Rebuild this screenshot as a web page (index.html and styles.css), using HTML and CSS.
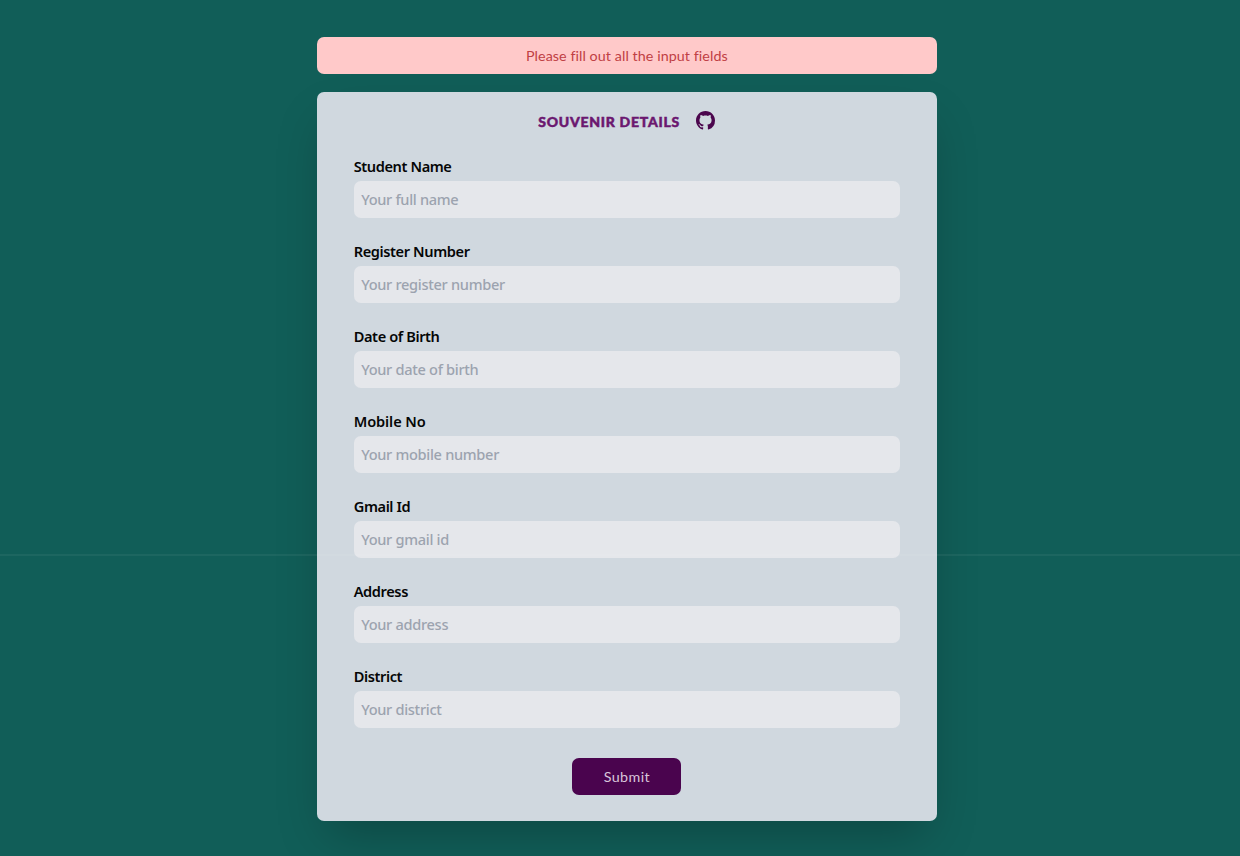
FILE: index.html
```
<!DOCTYPE html>
<html lang="en">
<head>
<meta charset="utf-8">
<title>Souvenir Details</title>
<link rel="stylesheet" href="styles.css">
</head>
<body>
<main class="page">
  <div class="alert" role="alert">Please fill out all the input fields</div>
  <form class="card">
    <header class="heading">
      <h1 class="title">SOUVENIR DETAILS</h1>
      <svg class="github" viewBox="0 0 16 16" aria-label="GitHub"><path d="M8 0C3.58 0 0 3.58 0 8c0 3.54 2.29 6.53 5.47 7.59.4.07.55-.17.55-.38 0-.19-.01-.82-.01-1.49-2.01.37-2.53-.49-2.69-.94-.09-.23-.48-.94-.82-1.13-.28-.15-.68-.52-.01-.53.63-.01 1.08.58 1.23.82.72 1.21 1.87.87 2.33.66.07-.52.28-.87.51-1.07-1.78-.2-3.64-.89-3.64-3.95 0-.87.31-1.59.82-2.15-.08-.2-.36-1.02.08-2.12 0 0 .67-.21 2.2.82.64-.18 1.32-.27 2-.27s1.36.09 2 .27c1.53-1.04 2.2-.82 2.2-.82.44 1.1.16 1.92.08 2.12.51.56.82 1.27.82 2.15 0 3.07-1.87 3.75-3.65 3.95.29.25.54.73.54 1.48 0 1.07-.01 1.93-.01 2.2 0 .21.15.46.55.38A8.01 8.01 0 0 0 16 8c0-4.42-3.58-8-8-8z"/></svg>
    </header>
    <div class="field"><label class="label" for="name">Student Name</label><input class="input" id="name" placeholder="Your full name"></div>
    <div class="field"><label class="label" for="register">Register Number</label><input class="input" id="register" placeholder="Your register number"></div>
    <div class="field"><label class="label" for="birth">Date of Birth</label><input class="input" id="birth" placeholder="Your date of birth"></div>
    <div class="field"><label class="label mobile" for="mobile">Mobile No</label><input class="input" id="mobile" placeholder="Your mobile number"></div>
    <div class="field"><label class="label" for="gmail">Gmail Id</label><input class="input" id="gmail" placeholder="Your gmail id"></div>
    <div class="field"><label class="label" for="address">Address</label><input class="input" id="address" placeholder="Your address"></div>
    <div class="field"><label class="label" for="district">District</label><input class="input" id="district" placeholder="Your district"></div>
    <button class="submit" type="button">Submit</button>
  </form>
  <div class="seam"></div>
</main>
</body>
</html>
```
FILE: styles.css
```
* { box-sizing: border-box; }
body { margin: 0; background: #115e58; }
.page {
  position: relative;
  height: 856px;
  overflow: hidden;
  padding: 37px 303px 0 316.7px;
  font-family: "Noto Sans", "Open Sans", sans-serif;
}
.alert {
  height: 36.7px;
  border-radius: 7px;
  background: #ffc9c9;
  color: #bf4044;
  font: 400 14.3px/38px Lato, "Open Sans", sans-serif;
  letter-spacing: .07px;
  text-align: center;
}
.card {
  display: flex;
  flex-direction: column;
  height: 728.3px;
  margin-top: 18.8px;
  padding: 14px 37px 0;
  border-radius: 7px;
  background: #d0d8df;
  box-shadow: 0 23px 46px -11px rgba(0, 0, 0, .25);
}
.heading {
  display: flex;
  justify-content: center;
  gap: 16.5px;
  height: 48.5px;
}
.title {
  margin: 0;
  color: #6b176f;
  font: 900 14px/32px Lato, sans-serif;
  letter-spacing: .72px;
  -webkit-text-stroke: .5px #6b176f;
}
.github {
  width: 19px;
  height: 19px;
  margin-top: 4.5px;
  fill: #4b064d;
}
.field {
  display: flex;
  flex-direction: column;
  height: 85px;
}
.label {
  height: 26px;
  color: #050606;
  font-size: 14.6px;
  font-weight: 600;
  line-height: 23px;
  letter-spacing: -.4px;
}
.mobile { letter-spacing: -.1px; }
.input {
  width: 100%;
  height: 37px;
  padding: 0 7.5px;
  border: 0;
  border-radius: 7px;
  background: #e5e7eb;
  font: 500 14.6px/37px "Noto Sans", "Open Sans", sans-serif;
  letter-spacing: -.31px;
}
.input::placeholder { color: #9ca3af; opacity: 1; }
.submit {
  flex: none;
  align-self: center;
  width: 109px;
  height: 37px;
  margin-top: 8px;
  padding: 0;
  border: 0;
  border-radius: 7px;
  background: #4a044e;
  color: #d9c6db;
  font: 400 14.3px/38px Lato, "Open Sans", sans-serif;
  letter-spacing: .4px;
}
.seam {
  position: absolute;
  top: 554px;
  left: 0;
  width: 100%;
  height: 2px;
  background: rgba(255, 255, 255, .05);
}
```
